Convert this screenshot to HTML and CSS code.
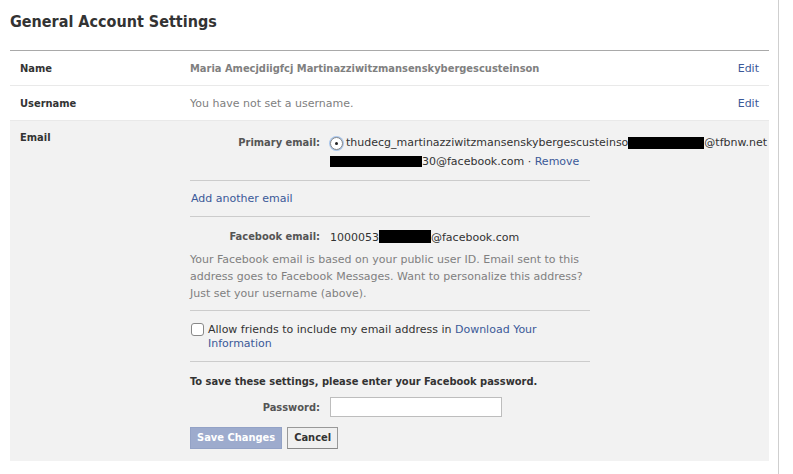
FILE: index.html
```html
<!DOCTYPE html>
<html>
<head>
<meta charset="utf-8">
<link rel="stylesheet" href="styles.css">
</head>
<body>
<div class="page">
  <h2 class="title">General Account Settings</h2>
  <div class="settings">
    <div class="row">
      <div class="label">Name</div>
      <div class="value name-value">Maria Amecjdiigfcj Martinazziwitzmansenskybergescusteinson</div>
      <a class="edit">Edit</a>
    </div>
    <div class="row">
      <div class="label">Username</div>
      <div class="value muted">You have not set a username.</div>
      <a class="edit">Edit</a>
    </div>
    <div class="row open">
      <div class="label">Email</div>
      <div class="content">
        <div class="field primary">
          <div class="flabel">Primary email:</div>
          <div class="fvalue">
            <div class="line1"><span class="radio"><span class="dot"></span></span>thudecg_martinazziwitzmansenskybergescusteinso<span class="redact r1"></span>@tfbnw.net</div>
            <div class="line2"><span class="redact r2"></span>30@facebook.com · <a class="link">Remove</a></div>
          </div>
        </div>
        <div class="sep"></div>
        <div class="add"><a class="link">Add another email</a></div>
        <div class="sep"></div>
        <div class="field fb">
          <div class="flabel">Facebook email:</div>
          <div class="fvalue">1000053<span class="redact r3"></span>@facebook.com</div>
        </div>
        <p class="note">Your Facebook email is based on your public user ID. Email sent to this address goes to Facebook Messages. Want to personalize this address? Just set your username (above).</p>
        <div class="sep"></div>
        <label class="check"><span class="box"></span><span class="check-text"><span class="ln">Allow friends to include my email address in <a class="link">Download Your</a></span><a class="link ln">Information</a></span></label>
        <div class="sep"></div>
        <div class="save-note">To save these settings, please enter your Facebook password.</div>
        <div class="field pw">
          <div class="flabel">Password:</div>
          <div class="fvalue"><span class="input"></span></div>
        </div>
        <div class="buttons">
          <span class="btn save">Save Changes</span>
          <span class="btn cancel">Cancel</span>
        </div>
      </div>
    </div>
  </div>
</div>
</body>
</html>
```
FILE: styles.css
```css
html, body {
  margin: 0;
  padding: 0;
  background: #fff;
}
body {
  font-family: "DejaVu Sans", "Liberation Sans", sans-serif;
  font-size: 11px;
  color: #333;
}
.page {
  width: 779px;
  min-height: 474px;
  border-right: 1px solid #cfcfcf;
  box-sizing: border-box;
}
.title {
  margin: 0;
  padding: 12px 0 0 10px;
  height: 38px;
  font-family: "DejaVu Sans Condensed", "DejaVu Sans", sans-serif;
  font-stretch: condensed;
  font-size: 16px;
  font-weight: bold;
  color: #333;
  line-height: 20px;
}
.settings {
  margin-left: 10px;
  width: 759px;
  border-top: 1px solid #a9a9a9;
}
.row {
  display: grid;
  grid-template-columns: 180px 1fr auto;
  align-items: center;
  height: 35px;
  padding-right: 10px;
  border-bottom: 1px solid #e9e9e9;
  box-sizing: border-box;
}
.label, .name-value, .flabel, .save-note, .btn {
  font-family: "DejaVu Sans Condensed", "DejaVu Sans", sans-serif;
  font-stretch: condensed;
  font-weight: bold;
}
.label {
  padding-left: 10px;
  color: #333;
}
.name-value { color: #808080; }
.muted { color: #808080; }
.edit, .link {
  color: #3b5998;
  text-decoration: none;
}
.row.open {
  height: auto;
  align-items: start;
  background: #f2f2f2;
  padding-top: 10px;
  padding-bottom: 12px;
  border-bottom: none;
}
.content {
  width: 400px;
  grid-column: 2 / 4;
  padding-top: 5px;
}
.field {
  display: grid;
  grid-template-columns: 130px auto;
  column-gap: 10px;
}
.flabel {
  text-align: right;
  color: #555;
}
.fvalue { white-space: nowrap; }
.primary { line-height: 14px; }
.line1 { display: flex; align-items: center; }
.line2 { margin-top: 5px; }
.radio {
  width: 11px;
  height: 11px;
  border: 1px solid #888;
  border-radius: 50%;
  margin-right: 3px;
  display: inline-flex;
  align-items: center;
  justify-content: center;
  background: #fff;
  box-shadow: 0 0 0 1px #a9c6ec;
}
.dot {
  width: 3px;
  height: 3px;
  border-radius: 50%;
  background: #222;
}
.redact {
  display: inline-block;
  background: #000;
  vertical-align: -2px;
}
.r1 { width: 76px; height: 12px; }
.r2 { width: 92px; height: 11px; }
.r3 { width: 52px; height: 13px; }
.sep {
  height: 1px;
  background: #ccc;
}
.primary + .sep { margin-top: 11px; }
.add { padding: 11px 0 10px 1px; line-height: 14px; }
.fb { margin-top: 13px; line-height: 14px; }
.note {
  margin: 6px 0 8px;
  line-height: 17px;
  color: #808080;
}
.check {
  display: flex;
  align-items: flex-start;
  padding: 12px 0 10px 1px;
  line-height: 14px;
}
.check-text {
  display: flex;
  flex-direction: column;
  align-items: flex-start;
}
.box {
  flex: none;
  width: 11px;
  height: 11px;
  border: 1px solid #888;
  border-radius: 3px;
  background: #fff;
  margin: 0 4px 0 0;
}
.save-note {
  margin-top: 13px;
  line-height: 14px;
  color: #333;
}
.pw {
  margin-top: 8px;
  align-items: center;
}
.input {
  display: block;
  width: 172px;
  height: 20px;
  border: 1px solid #bdbdbd;
  background: #fff;
  box-sizing: border-box;
}
.buttons {
  margin-top: 10px;
  display: flex;
  gap: 5px;
}
.btn {
  display: inline-block;
  height: 22px;
  line-height: 20px;
  padding: 0 6px;
  box-sizing: border-box;
}
.save {
  background: #9dabcd;
  border: 1px solid #93a2c6;
  color: #fff;
}
.cancel {
  background: #f0f0f0;
  border: 1px solid #999;
  border-bottom-color: #888;
  color: #333;
}
```
